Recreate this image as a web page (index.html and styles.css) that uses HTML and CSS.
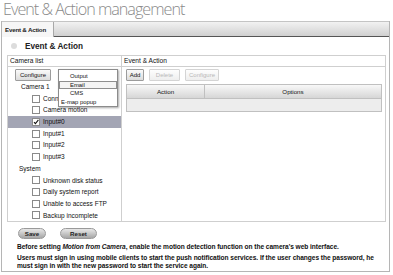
FILE: index.html
```html
<!DOCTYPE html>
<html>
<head>
<meta charset="utf-8">
<link rel="stylesheet" href="styles.css">
</head>
<body>
<h1 class="page-title">Event &amp; Action management</h1>
<div class="window">
  <div class="tabbar"><div class="tab">Event &amp; Action</div></div>
  <div class="section"><span class="bullet"></span><span class="section-label">Event &amp; Action</span></div>
  <div class="panels">
    <div class="panel panel-left">
      <div class="panel-head">Camera list</div>
      <div class="toolbar"><button class="btn">Configure</button></div>
      <ul class="tree">
        <li class="group">Camera 1</li>
        <li class="item"><span class="cb"></span>Connection lost</li>
        <li class="item"><span class="cb"></span>Camera motion</li>
        <li class="item selected"><span class="cb"><svg viewBox="0 0 8 8" width="8" height="8"><path d="M1.3 4.2 L3.2 6.2 L7.2 1.2" fill="none" stroke="#111" stroke-width="1.4"/></svg></span>Input#0</li>
        <li class="item"><span class="cb"></span>Input#1</li>
        <li class="item"><span class="cb"></span>Input#2</li>
        <li class="item"><span class="cb"></span>Input#3</li>
        <li class="group group-sys">System</li>
        <li class="item"><span class="cb"></span>Unknown disk status</li>
        <li class="item"><span class="cb"></span>Daily system report</li>
        <li class="item"><span class="cb"></span>Unable to access FTP</li>
        <li class="item"><span class="cb"></span>Backup incomplete</li>
      </ul>
      <ul class="menu">
        <li class="menu-item">Output</li>
        <li class="menu-item active">Email</li>
        <li class="menu-item">CMS</li>
        <li class="menu-item wide">E-map popup</li>
      </ul>
    </div>
    <div class="panel panel-right">
      <div class="panel-head">Event &amp; Action</div>
      <div class="toolbar toolbar-right">
        <button class="btn btn-add">Add</button>
        <button class="btn btn-del disabled">Delete</button>
        <button class="btn btn-cfg disabled">Configure</button>
      </div>
      <div class="table">
        <div class="th th-action">Action</div>
        <div class="th th-options">Options</div>
        <div class="td"></div>
      </div>
    </div>
  </div>
  <div class="actions">
    <button class="pill">Save</button>
    <button class="pill">Reset</button>
  </div>
  <p class="note">Before setting <em>Motion from Camera</em>, enable the motion detection function on the camera's web interface.</p>
  <p class="note note2">Users must sign in using mobile clients to start the push notification services. If the user changes the password, he must sign in with the new password to start the service again.</p>
</div>
</body>
</html>
```
FILE: styles.css
```css
* { box-sizing: border-box; }
html, body { margin: 0; padding: 0; background: #fff; }
body { font-family: "Liberation Sans", Arial, sans-serif; color: #222; width: 393px; height: 275px; overflow: hidden; }

.page-title {
  margin: 0;
  height: 21px;
  padding-left: 3px;
  font-family: "Open Sans", "Lato", sans-serif;
  font-weight: 300;
  font-size: 16.2px;
  line-height: 19px;
  color: #8a8a8a;
  letter-spacing: -1px;
  white-space: nowrap;
}

.window {
  margin-left: 1px;
  width: 389px;
  height: 251px;
  border-left: 1px solid #b5b5b5;
  border-right: 1px solid #b5b5b5;
  border-bottom: 1px solid #b5b5b5;
  position: relative;
}

.tabbar {
  height: 16px;
  background: linear-gradient(#f2f2f2, #d0d0d0);
  border-top: 1px solid #c4c4c4;
  border-bottom: 1px solid #555;
  display: flex;
}
.tab {
  width: 52px;
  height: 15px;
  background: #f6f6f6;
  border-right: 1px solid #a8a8a8;
  font-size: 6.2px;
  font-weight: bold;
  line-height: 15px;
  padding-left: 3px;
  letter-spacing: -0.2px;
  color: #222;
}

.section {
  height: 18px;
  display: flex;
  align-items: center;
  padding-left: 9px;
}
.bullet {
  width: 6px;
  height: 6px;
  border-radius: 50%;
  background: #dcdcdc;
  margin-right: 8px;
}
.section-label {
  font-weight: bold;
  font-size: 8.2px;
  color: #222;
}

.panels {
  margin-left: 5px;
  width: 379px;
  height: 167px;
  border: 1px solid #cfcfcf;
  display: flex;
}
.panel { position: relative; height: 100%; }
.panel-left { width: 114px; border-right: 1px solid #cfcfcf; }
.panel-right { flex: 1; }

.panel-head {
  height: 11px;
  border-bottom: 1px solid #cfcfcf;
  font-size: 6.6px;
  line-height: 10px;
  padding-left: 2px;
  color: #111;
}

.toolbar {
  display: flex;
  gap: 3px;
  padding: 2px 0 0 7px;
  height: 14px;
}
.toolbar-right { padding-left: 4px; gap: 5px; }
.btn {
  margin: 0;
  height: 12px;
  padding: 0 4px;
  font-family: "Liberation Sans", Arial, sans-serif;
  font-size: 6px;
  line-height: 10px;
  color: #111;
  background: linear-gradient(#fafafa, #dcdcdc);
  border: 1px solid #9c9c9c;
  border-radius: 1px;
}
.btn-add { width: 18px; padding: 0; }
.btn-del { width: 31px; padding: 0; }
.btn-cfg { width: 34px; padding: 0; }
.btn.disabled { color: #b8b8b8; border-color: #d4d4d4; background: linear-gradient(#fdfdfd, #eeeeee); }

.tree { list-style: none; margin: 0; padding: 0; }
.tree li {
  height: 11.7px;
  line-height: 11.7px;
  font-size: 6.5px;
  color: #111;
  display: flex;
  align-items: center;
}
.group { padding-left: 13px; }
.group-sys { padding-left: 11px; }
.item { padding-left: 24px; }
.item.selected { background: #a3a5b4; }
.cb {
  width: 8px;
  height: 8px;
  border: 1px solid #8a8a8a;
  background: #fff;
  margin-right: 3px;
  display: flex;
  align-items: center;
  justify-content: center;
}
.cb svg { display: block; }

.menu {
  position: absolute;
  left: 50px;
  top: 13px;
  width: 60px;
  height: 38px;
  margin: 0;
  padding: 2px 0 0 0;
  list-style: none;
  background: #fff;
  border: 1px solid #8c8c8c;
  box-shadow: 1px 1px 2px rgba(0,0,0,0.35);
}
.menu-item {
  height: 8.7px;
  line-height: 8.7px;
  font-size: 5.9px;
  padding-left: 11px;
  color: #111;
  white-space: nowrap;
}
.menu-item.active { box-shadow: inset 0 0 0 1px #8e8e8e; background: #f4f4f4; }
.menu-item.wide { padding-left: 2px; }

.table {
  margin: 3px 0 0 4px;
  width: 256px;
  display: grid;
  grid-template-columns: 78px 1fr;
  border: 1px solid #c0c0c0;
}
.th {
  height: 14px;
  line-height: 14px;
  font-size: 6.2px;
  text-align: center;
  color: #111;
  background: linear-gradient(#f8f8f8, #d6d6d6);
  border-bottom: 1px solid #c0c0c0;
}
.th-action { border-right: 1px solid #c0c0c0; }
.td { grid-column: 1 / 3; height: 12px; background: #ededed; }

.actions {
  display: flex;
  gap: 14px;
  padding: 6px 0 0 16px;
  height: 17px;
}
.pill {
  margin: 0;
  height: 11px;
  padding: 0;
  border-radius: 6px;
  border: 1px solid #9a9a9a;
  background: linear-gradient(#e8e8e8, #a6a6a6);
  font-family: "Liberation Sans", Arial, sans-serif;
  font-weight: bold;
  font-size: 6.2px;
  color: #222;
}
.pill:first-child { width: 28px; }
.pill:last-child { width: 37px; }

.note {
  margin: 4px 0 0 15px;
  font-size: 6.6px;
  line-height: 7.4px;
  font-weight: bold;
  color: #111;
  width: 358px;
  letter-spacing: -0.05px;
}
.note2 { margin-top: 4px; }
```
